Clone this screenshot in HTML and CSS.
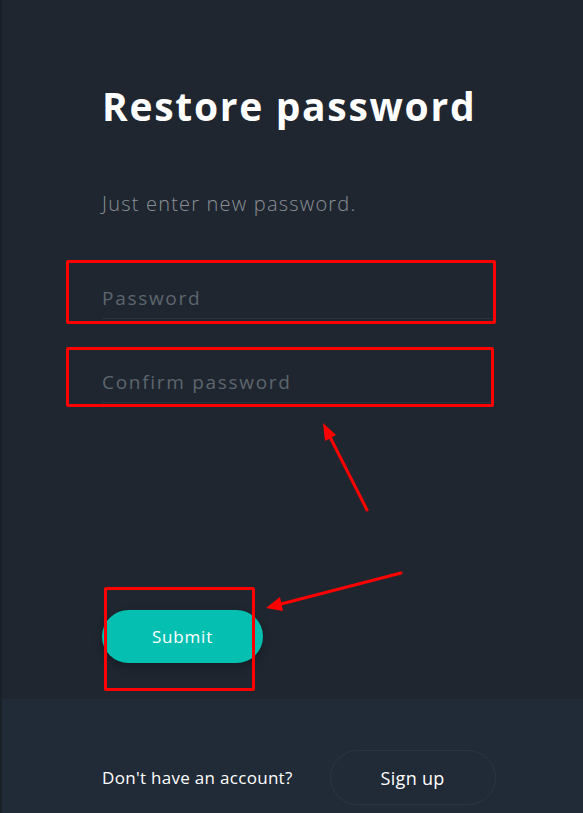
FILE: index.html
```html
<!DOCTYPE html>
<html>
<head>
  <title>Restore password</title>
  <link rel="stylesheet" href="styles.css">
</head>
<body>
  <div class="page">
    <div class="main">
      <h1 class="title">Restore password</h1>
      <p class="lead">Just enter new password.</p>

      <form class="form">
        <input class="field" type="password" placeholder="Password">
        <input class="field field-confirm" type="password" placeholder="Confirm password">
        <button class="btn-submit" type="submit">Submit</button>
      </form>
    </div>

    <div class="footer">
      <span class="footer-text">Don't have an account?</span>
      <a class="btn-signup" href="#">Sign up</a>
    </div>
  </div>

  <!-- review marks drawn over the screen -->
  <div class="marks">
    <div class="mark mark-password"></div>
    <div class="mark mark-confirm"></div>
    <div class="mark mark-submit"></div>
    <svg class="arrows" width="583" height="813" viewBox="0 0 583 813">
      <line x1="367" y1="510" x2="330" y2="437" stroke="#ff0000" stroke-width="3" stroke-linecap="round"/>
      <polygon points="323,423 336,435 325,441" fill="#ff0000"/>
      <line x1="401" y1="573" x2="281" y2="604" stroke="#ff0000" stroke-width="3" stroke-linecap="round"/>
      <polygon points="266,608 283,611 280,597" fill="#ff0000"/>
    </svg>
  </div>
</body>
</html>
```

FILE: styles.css
```css
html, body {
  margin: 0;
  padding: 0;
}
body {
  background: #1f2630;
  font-family: "Open Sans", "Liberation Sans", sans-serif;
  color: #ffffff;
}
.page {
  display: flex;
  flex-direction: column;
  min-height: 100vh;
  border-left: 2px solid #1a2028;
}
.main {
  flex: 1;
  padding: 82px 0 0 100px;
}
.title {
  margin: 0;
  font-size: 39px;
  line-height: 48px;
  font-weight: 700;
  letter-spacing: 1.7px;
  color: #ffffff;
}
.lead {
  margin: 62px 0 0;
  font-size: 20px;
  line-height: 24px;
  font-weight: 300;
  letter-spacing: 1.2px;
  color: #8b9096;
}
.form {
  display: flex;
  flex-direction: column;
  align-items: flex-start;
  margin-top: 58px;
}
.field {
  box-sizing: border-box;
  width: 393px;
  height: 45px;
  padding: 12px 0 8px;
  border: none;
  border-bottom: 1px solid #2a323b;
  background: transparent;
  font-family: inherit;
  font-size: 19px;
  line-height: 24px;
  letter-spacing: 1.7px;
  color: #ffffff;
  outline: none;
}
.field::placeholder { color: #5e656d; }
.field-confirm { margin-top: 39px; }
.btn-submit {
  margin-top: 207px;
  width: 161px;
  height: 53px;
  border: none;
  border-radius: 27px;
  background: #05bfb1;
  box-shadow: 0 4px 10px rgba(0,0,0,0.25);
  font-family: inherit;
  font-size: 17px;
  letter-spacing: 0.8px;
  color: #ffffff;
  cursor: pointer;
}
.footer {
  height: 114px;
  box-sizing: border-box;
  padding: 51px 0 0 100px;
  background: #212b37;
  display: flex;
  align-items: flex-start;
  gap: 37px;
}
.footer-text {
  font-size: 17px;
  line-height: 55px;
  letter-spacing: 0.3px;
  color: #ffffff;
}
.btn-signup {
  box-sizing: border-box;
  width: 166px;
  height: 55px;
  border: 1px solid #2c3642;
  border-radius: 28px;
  display: flex;
  align-items: center;
  justify-content: center;
  font-size: 18px;
  letter-spacing: 0.3px;
  color: #ffffff;
  text-decoration: none;
}

/* annotation overlay */
.marks {
  position: absolute;
  left: 0;
  top: 0;
  width: 583px;
  height: 813px;
  pointer-events: none;
}
.mark {
  position: absolute;
  box-sizing: border-box;
  border: 3px solid #ff0000;
  border-radius: 2px;
}
.mark-password { left: 66px; top: 260px; width: 430px; height: 64px; }
.mark-confirm { left: 66px; top: 347px; width: 428px; height: 60px; }
.mark-submit { left: 104px; top: 587px; width: 151px; height: 104px; }
.arrows {
  position: absolute;
  left: 0;
  top: 0;
}
```
